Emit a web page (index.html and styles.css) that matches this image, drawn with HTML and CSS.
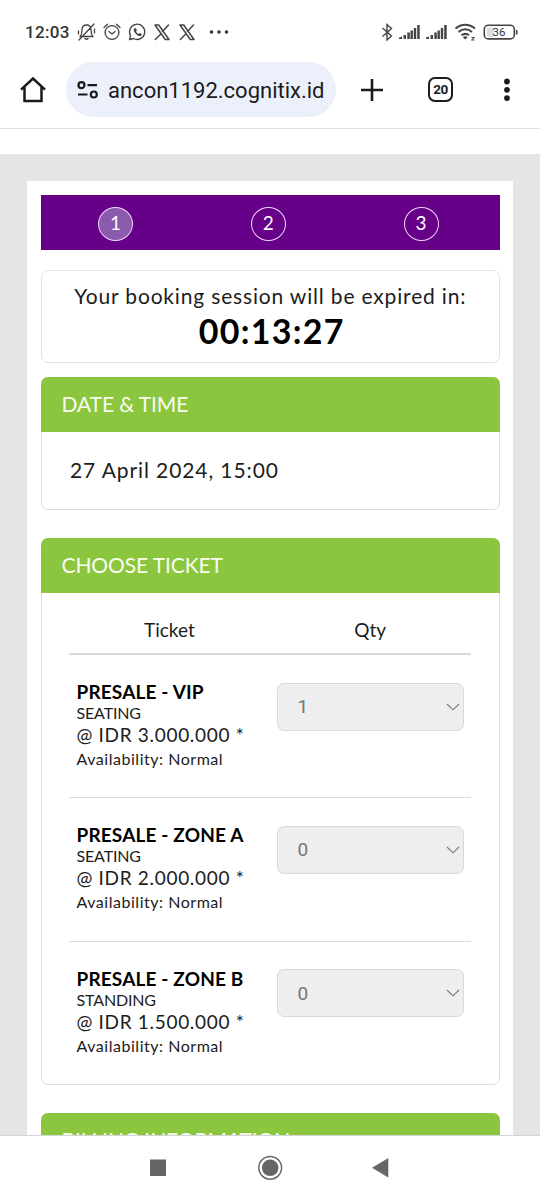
FILE: index.html
```html
<!DOCTYPE html>
<html lang="en">
<head>
<meta charset="utf-8">
<title>Booking</title>
<link rel="stylesheet" href="styles.css">
</head>
<body>
<div class="phone">
  <header class="status">
    <span class="clock">12:03</span>
    <svg class="status-left" width="155" height="24" viewBox="75 20 155 24" fill="none" stroke="#444" stroke-width="1.3" stroke-linecap="round" stroke-linejoin="round">
      <path d="M80 36.500h13c-2-2-2-4-2-6.500 0-3.300-1.700-5-4.500-5s-4.500 1.700-4.500 5c0 2.500 0 4.500-2 6.500zM85 38.500c.8 1 2.200 1 3 0M79 40 94 24M78.500 31v3M94.500 29v4"/>
      <circle cx="112" cy="32.500" r="6.900"/><path d="m109 31.500 3 2.500 3-2.500M104 27.500l3.500-3.200M120 27.500l-3.500-3.200"/>
      <path d="M129.500 39.500l1-4a7.600 7.600 0 1 1 3 3z"/>
      <path d="M134 28.500c-1 2 .5 4 2 5.500s3.500 2.700 5.200 1.700l.6-1.800-2-1-1.200 1c-1.300-.5-2-1.300-2.500-2.500l.8-1.100-1-2z" fill="#444" stroke="none"/>
      <g id="x"><path d="M155 25h3.700l10.300 14.500h-3.700zM168.500 25l-6 6.500M161.300 33.500l-6 6" stroke-width="1.500"/></g>
      <use href="#x" x="25"/>
      <g fill="#333" stroke="none"><circle cx="211.500" cy="32" r="1.800"/><circle cx="219" cy="32" r="1.800"/><circle cx="226.500" cy="32" r="1.800"/></g>
    </svg>
    <svg class="status-right" width="140" height="24" viewBox="380 20 140 24" fill="none" stroke="#444" stroke-width="1.400">
      <path d="m382.500 28 9 8-4.500 4V24.500l4.500 4-9 8"/>
      <g id="sig" fill="#444" stroke="none"><path d="M399 39v-1.500l3-1V39zM403.500 39v-4h2.500v4zM407.300 39v-6.500h2.500V39zM410.500 39v-8.500h2.400V39zM413.800 39V28h2.400v11zM417.200 39V25h2.500v14z"/></g>
      <use href="#sig" x="27"/>
      <path d="M455.500 28.500c6-5 13.500-5 19.500 0M458.500 32c4.500-3.600 9-3.600 13.500 0M461.500 35.300c2.500-1.900 5-1.900 7.500 0" stroke-width="2"/>
      <path d="m462.800 37.200 2.400 2.300 2.500-2.300c-1.500-1.200-3.400-1.200-4.900 0z" fill="#444" stroke="none"/>
      <path d="M471.500 37.500h3l-3 2.500h3" stroke-width="1"/>
      <rect x="484.300" y="25.300" width="30" height="13.600" rx="4" stroke-width="1.600"/>
      <path d="M487 27.500h7v9.500h-7z" fill="#ddd" stroke="none"/>
      <path d="M516.700 30v4.500" stroke-width="1.600"/>
      <text x="499" y="36" class="battery">36</text>
    </svg>
  </header>

  <nav class="toolbar">
    <svg class="home" width="26" height="27" viewBox="0 0 26 27" fill="none" stroke="#1b1b1e" stroke-width="2.500"><path d="M1 13.700 13 2.500l12 11.200M4.500 11v14h17V11"/></svg>
    <div class="address">
      <svg width="22" height="18" viewBox="0 0 22 18" fill="none" stroke="#1b1b1e" stroke-width="2.200"><circle cx="4.500" cy="4.200" r="3"/><path d="M10.500 4.200H20M1 13.500h9.500"/><circle cx="16.800" cy="13.500" r="3"/></svg>
      <span>ancon1192.cognitix.id</span>
    </div>
    <svg class="plus" width="22" height="22" viewBox="0 0 22 22" stroke="#1b1b1e" stroke-width="2.600"><path d="M11 0v22M0 11h22"/></svg>
    <span class="tabs">20</span>
    <svg class="more" width="6" height="24" viewBox="0 0 6 24" fill="#1b1b1e"><circle cx="3" cy="3.500" r="2.900"/><circle cx="3" cy="11.800" r="2.900"/><circle cx="3" cy="20.100" r="2.900"/></svg>
  </nav>

  <main class="viewport">
    <div class="card">
      <div class="steps">
        <div class="step"><span class="bubble active">1</span></div>
        <div class="step"><span class="bubble">2</span></div>
        <div class="step"><span class="bubble">3</span></div>
      </div>

      <div class="timer">
        <div class="timer-label">Your booking session will be expired in:</div>
        <div class="timer-value">00:13:27</div>
      </div>

      <section class="panel date-panel">
        <h2 class="panel-title">DATE &amp; TIME</h2>
        <div class="date">27 April 2024, 15:00</div>
      </section>

      <section class="panel ticket-panel">
        <h2 class="panel-title">CHOOSE TICKET</h2>
        <div class="tickets">
          <div class="head"><span>Ticket</span><span>Qty</span></div>
          <div class="row">
            <div class="info">
              <div class="name">PRESALE - VIP</div>
              <div class="kind">SEATING</div>
              <div class="price">@ IDR 3.000.000 *</div>
              <div class="avail">Availability: Normal</div>
            </div>
            <div class="qty"><span>1</span><svg width="14" height="8" viewBox="0 0 14 8"><path d="m1 1 6 5.800L13 1"/></svg></div>
          </div>
          <div class="row">
            <div class="info">
              <div class="name">PRESALE - ZONE A</div>
              <div class="kind">SEATING</div>
              <div class="price">@ IDR 2.000.000 *</div>
              <div class="avail">Availability: Normal</div>
            </div>
            <div class="qty"><span>0</span><svg width="14" height="8" viewBox="0 0 14 8"><path d="m1 1 6 5.800L13 1"/></svg></div>
          </div>
          <div class="row">
            <div class="info">
              <div class="name">PRESALE - ZONE B</div>
              <div class="kind">STANDING</div>
              <div class="price">@ IDR 1.500.000 *</div>
              <div class="avail">Availability: Normal</div>
            </div>
            <div class="qty"><span>0</span><svg width="14" height="8" viewBox="0 0 14 8"><path d="m1 1 6 5.800L13 1"/></svg></div>
          </div>
        </div>
      </section>

      <section class="panel billing-panel">
        <h2 class="panel-title">BILLING INFORMATION</h2>
      </section>
    </div>
  </main>

  <footer class="navbar">
    <svg width="540" height="64" viewBox="0 1136 540 64" fill="#666">
      <rect x="150" y="1159.500" width="16" height="16.500"/>
      <circle cx="270.200" cy="1167.800" r="11.400" fill="none" stroke="#666" stroke-width="1.500"/>
      <circle cx="270.200" cy="1167.800" r="8.300"/>
      <path d="M372.500 1167.800 388 1158.500v18.600z" stroke="#666" stroke-linejoin="round" stroke-width=".6"/>
    </svg>
  </footer>
</div>
</body>
</html>
```
FILE: styles.css
```css
* { box-sizing: border-box; }
body { margin: 0; background: #fff; color: #1c1c1c; font-family: Lato, sans-serif; font-weight: 400; font-variant-ligatures: none; }
svg { display: block; flex: none; }
.phone { width: 540px; height: 1200px; display: flex; flex-direction: column; overflow: hidden; }

.status { height: 64px; flex: none; display: flex; align-items: center; padding: 0 20px 0 25px; font-family: Roboto, sans-serif; }
.clock { width: 50px; font-size: 17px; font-weight: 500; color: #333; letter-spacing: .35px; }
.status-right { margin-left: auto; }
.battery { font: 400 11.5px Roboto, sans-serif; fill: #333; stroke: none; text-anchor: middle; }

.toolbar { height: 65px; flex: none; display: flex; align-items: flex-start; padding: 0 30px 0 20px; border-bottom: 1.5px solid #dedede; font-family: Roboto, sans-serif; color: #1b1b1e; }
.home { margin: 12px 20px 0 0; }
.address { width: 270px; height: 55px; margin-top: -2px; border-radius: 28px; background: #ecf0fa; display: flex; align-items: center; gap: 9px; padding: 2px 0 0 11px; font-size: 22px; font-weight: 400; }
.address svg { margin-top: -2px; }
.plus { margin: 15px 0 0 25px; }
.tabs { width: 25px; height: 25px; margin: 13px 0 0 45px; border: 2.5px solid #1b1b1e; border-radius: 7px; font-size: 13.5px; font-weight: 700; line-height: 21px; text-align: center; letter-spacing: -.5px; }
.more { margin: 14px 0 0 51px; }

.viewport { flex: 1; min-height: 0; overflow: hidden; margin-top: 25px; padding: 27px 27px 0; background: #e4e6e5; }
.card { height: 1000px; background: #fff; padding: 14px 13.500px 0 14px; }
.steps { height: 55px; background: #660088; display: flex; }
.step { flex: 1; display: flex; justify-content: center; align-items: center; padding: 2px 4px 0 0; }
.bubble { width: 35px; height: 34px; border: 1.5px solid #f0d8f8; border-radius: 50%; color: #fff; font-size: 19px; line-height: 30px; text-align: center; }
.bubble.active { background: #8c5aac; }

.timer { height: 93px; margin-top: 20px; border: 1.500px solid #e2e2e2; border-radius: 7px; padding-top: 11px; text-align: center; }
.timer-label { font-size: 21px; line-height: 28px; letter-spacing: .83px; white-space: nowrap; }
.timer-value { font-size: 34px; font-weight: 700; line-height: 41px; letter-spacing: 1.3px; padding-left: 3px; color: #000; }

.panel { border: 1px solid #dcdedd; border-radius: 7px; }
.panel-title { margin: -1px -1px 0; height: 55px; padding-left: 20.500px; border-radius: 7px 7px 0 0; background: #8cc63e; color: #f8fdf0; font-size: 21px; font-weight: 400; line-height: 54px; letter-spacing: -.1px; }
.date-panel { height: 133px; margin-top: 14px; }
.date { padding-left: 28px; font-size: 21px; line-height: 76px; letter-spacing: .9px; }
.ticket-panel { height: 547px; margin-top: 27.500px; }
.billing-panel { height: 200px; margin-top: 28px; }

.tickets { padding: 0 28px 0 27px; }
.head { height: 62.500px; display: flex; padding-top: 12px; border-bottom: 2px solid #d8dada; font-size: 19px; line-height: 50px; text-align: center; }
.head span { flex: 1; }
.row { height: 143.300px; display: flex; justify-content: space-between; padding: 25px 6.500px 0 7.500px; border-bottom: 1px solid #dcdedd; white-space: nowrap; }
.row:last-child { border-bottom: 0; }
.name { font-size: 19px; font-weight: 700; line-height: 23px; letter-spacing: .15px; color: #000; }
.kind { font-size: 16px; line-height: 20px; letter-spacing: -.15px; }
.price { font-size: 19px; line-height: 24px; letter-spacing: .68px; }
.avail { font-size: 16px; line-height: 24px; letter-spacing: .53px; }
.qty { width: 187.500px; height: 48px; margin-top: 2.500px; padding: 0 3px 0 20px; display: flex; align-items: center; justify-content: space-between; background: #eee; border: 1px solid #d9d9d9; border-radius: 7px; color: #777; font: 400 19px Roboto, sans-serif; }
.qty path { fill: none; stroke: #777; stroke-width: 1.1; }

.navbar { height: 65px; flex: none; border-top: 1px solid #d5d5d5; background: #fff; }
```
